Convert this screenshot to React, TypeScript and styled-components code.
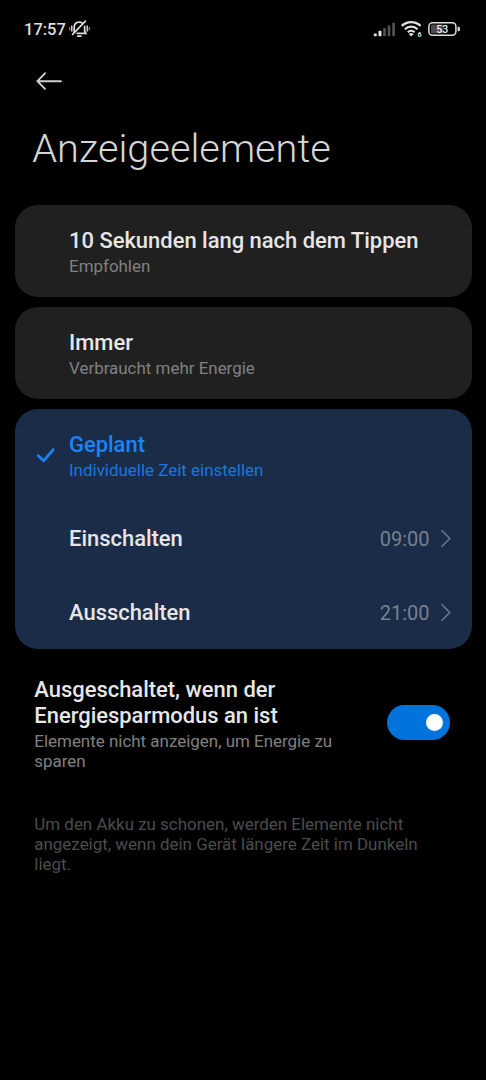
import React from 'react';
import styled, { createGlobalStyle } from 'styled-components';

const GlobalStyle = createGlobalStyle`
  * { box-sizing: border-box; }
  body {
    margin: 0;
    background: #000;
    font-family: Roboto, sans-serif;
    -webkit-font-smoothing: antialiased;
  }
`;

const Screen = styled.div`
  width: 486px;
  height: 1080px;
  overflow: hidden;
  background: #000;
  color: #e6e6e6;
`;

const StatusBar = styled.header`
  display: flex;
  justify-content: space-between;
  align-items: center;
  height: 58px;
  padding: 0 26px 0 24px;
`;

const StatusGroup = styled.div`
  display: flex;
  align-items: center;
`;

const Clock = styled.span`
  font-size: 16.5px;
  line-height: 20px;
  padding-top: 1px;
  font-weight: 500;
  color: #dedede;
  margin-right: 3px;
`;

const NavBar = styled.nav`
  height: 46px;
  padding: 14px 0 0 36px;
`;

const BackButton = styled.button`
  display: block;
  padding: 0;
  border: 0;
  background: none;
  line-height: 0;
`;

const PageTitle = styled.h1`
  margin: 22px 0 0 32.3px;
  font-size: 39.7px;
  line-height: 46px;
  font-weight: 300;
  color: #d6d6d6;
`;

const OptionList = styled.div`
  display: flex;
  flex-direction: column;
  gap: 9.5px;
  margin: 33px 14.5px 0;
`;

const Card = styled.section<{ $selected?: boolean }>`
  border-radius: 23px;
  background: ${p => (p.$selected ? '#1a2c48' : '#202020')};
  height: ${p => (p.$selected ? '240px' : '92.3px')};
`;

const Option = styled.div`
  display: flex;
  padding: 23.3px 20px 0 0;
  height: 94px;
`;

const CheckSlot = styled.div`
  width: 54.5px;
  padding: 15px 0 0 21.5px;
`;

const Label = styled.div<{ $active?: boolean }>`
  font-size: 21.95px;
  line-height: 26px;
  font-weight: 500;
  color: ${p => (p.$active ? '#1a84fa' : '#e6e6e6')};
`;

const Hint = styled.div<{ $active?: boolean }>`
  font-size: 16.95px;
  line-height: 19.8px;
  margin-top: 3.2px;
  color: ${p => (p.$active ? '#1977e0' : '#808080')};
`;

const TimeRow = styled.div`
  display: flex;
  align-items: center;
  height: 73.8px;
  padding: 0 19.5px 0 54.5px;
`;

const TimeValue = styled.span`
  margin-left: auto;
  font-size: 20px;
  line-height: 24px;
  color: #76808f;
  margin-right: 10.5px;
`;

const SwitchRow = styled.section`
  display: flex;
  align-items: center;
  justify-content: space-between;
  margin: 28px 36px 0 34.3px;
`;

const SwitchText = styled.div`
  width: 320px;
`;

const Toggle = styled.button`
  display: flex;
  align-items: center;
  justify-content: flex-end;
  width: 63px;
  height: 35px;
  margin-bottom: 3px;
  padding: 0 7px;
  border: 0;
  border-radius: 18px;
  background: #0273dc;
`;

const Knob = styled.span`
  width: 17.5px;
  height: 17.5px;
  border-radius: 50%;
  background: #fff;
`;

const Note = styled.p`
  margin: 43.7px 34.3px 0;
  width: 400px;
  font-size: 16.95px;
  line-height: 19.8px;
  color: #4c4c4c;
`;

const MutedBell = () => (
  <svg width="21" height="18" viewBox="0 0 21 18" fill="none" stroke="#dcdcdc" strokeWidth="1.7" strokeLinecap="round">
    <path d="M5.2 12.2V7.6C5.2 4.4 7.2 2.2 10.3 2.2c1.2 0 2.2.3 3 .9M15.6 6.4v4.4l1.3 2.6H8.2" />
    <path d="M3.6 14.4 16.4 1.2" />
    <path d="M8.9 16.2h3" strokeWidth="1.8" />
    <path d="M2.8 6v5M18.2 6v5" strokeWidth="1.4" />
    <path d="M.8 7.3v2.6M20.2 7.3v2.6" strokeWidth="1.1" stroke="#999" />
  </svg>
);

const Signal = () => (
  <svg width="22" height="15" viewBox="0 0 22 15">
    <rect x=".8" y="11.4" width="3" height="2.8" rx=".6" fill="#e2e2e2" />
    <rect x="5.5" y="8.8" width="3" height="5.4" rx=".6" fill="#e2e2e2" />
    <rect x="10.2" y="6.1" width="2.6" height="8.1" rx=".6" fill="#555" />
    <rect x="14.7" y="3.4" width="2.6" height="10.8" rx=".6" fill="#555" />
    <rect x="19.3" y=".8" width="2.6" height="13.4" rx=".6" fill="#555" />
  </svg>
);

const WifiIcon = styled.svg`
  margin: 0 4px 0 6px;
`;

const Wifi = () => (
  <WifiIcon width="23" height="20" viewBox="0 -1.6 23 20" fill="none" stroke="#e2e2e2" strokeWidth="2.2">
    <path d="M.8 5.3a13.4 13.4 0 0 1 18.8 0" />
    <path d="M3.9 8.6a9 9 0 0 1 12.6 0" />
    <path d="M6.8 11.7a4.9 4.9 0 0 1 6.8 0" />
    <path d="M10.2 16 7.8 13.5a3.4 3.4 0 0 1 4.8 0z" fill="#e2e2e2" stroke="none" />
    <text x="16.6" y="16.6" fontSize="7" fontWeight="700" fill="#e2e2e2" stroke="none">6</text>
  </WifiIcon>
);

const Battery = () => (
  <svg width="32" height="14" viewBox="0 0 32 14">
    <rect x="3" y="2.6" width="12.5" height="8.8" rx="1.5" fill="#4c4c4c" />
    <rect x=".9" y=".8" width="27" height="12.4" rx="3.6" fill="none" stroke="#dcdcdc" strokeWidth="1.5" />
    <path d="M30 5v4a2 2 0 0 0 0-4z" fill="#dcdcdc" stroke="#dcdcdc" strokeWidth=".8" />
    <text x="14.2" y="10.8" textAnchor="middle" fontSize="10.5" fontWeight="500" fill="#eee">53</text>
  </svg>
);

const BackArrow = () => (
  <svg width="27" height="19" viewBox="0 0 27 19" fill="none" stroke="#cfcfcf" strokeWidth="1.9" strokeLinecap="round" strokeLinejoin="round">
    <path d="M25 9.2H1.6M9 1.3 1.4 9.2 9 16.8" />
  </svg>
);

const Check = () => (
  <svg width="20" height="17" viewBox="0 0 20 17" fill="none" stroke="#1a84fa" strokeWidth="2.8" strokeLinecap="round" strokeLinejoin="round">
    <path d="M2.2 8.8 7.6 13.8 17.2 2.6" />
  </svg>
);

const Chevron = () => (
  <svg width="12" height="20" viewBox="0 0 12 20" fill="none" stroke="#6b7688" strokeWidth="1.6">
    <path d="M1.5 1.3 9.8 9.5 1.5 17.7" />
  </svg>
);

interface ChoiceProps {
  label: string;
  hint: string;
  active?: boolean;
}

const Choice = ({ label, hint, active }: ChoiceProps) => (
  <Option>
    <CheckSlot>{active && <Check />}</CheckSlot>
    <div>
      <Label $active={active}>{label}</Label>
      <Hint $active={active}>{hint}</Hint>
    </div>
  </Option>
);

const TimeSetting = ({ label, value }: { label: string; value: string }) => (
  <TimeRow>
    <Label>{label}</Label>
    <TimeValue>{value}</TimeValue>
    <Chevron />
  </TimeRow>
);

export default function App() {
  return (
    <>
      <GlobalStyle />
      <Screen>
        <StatusBar>
          <StatusGroup>
            <Clock>17:57</Clock>
            <MutedBell />
          </StatusGroup>
          <StatusGroup>
            <Signal />
            <Wifi />
            <Battery />
          </StatusGroup>
        </StatusBar>
        <NavBar>
          <BackButton aria-label="Zurück">
            <BackArrow />
          </BackButton>
        </NavBar>
        <PageTitle>Anzeigeelemente</PageTitle>
        <OptionList>
          <Card>
            <Choice label="10 Sekunden lang nach dem Tippen" hint="Empfohlen" />
          </Card>
          <Card>
            <Choice label="Immer" hint="Verbraucht mehr Energie" />
          </Card>
          <Card $selected>
            <Choice label="Geplant" hint="Individuelle Zeit einstellen" active />
            <TimeSetting label="Einschalten" value="09:00" />
            <TimeSetting label="Ausschalten" value="21:00" />
          </Card>
        </OptionList>
        <SwitchRow>
          <SwitchText>
            <Label>Ausgeschaltet, wenn der Energiesparmodus an ist</Label>
            <Hint>Elemente nicht anzeigen, um Energie zu sparen</Hint>
          </SwitchText>
          <Toggle role="switch" aria-checked="true" aria-label="Energiesparmodus">
            <Knob />
          </Toggle>
        </SwitchRow>
        <Note>
          Um den Akku zu schonen, werden Elemente nicht angezeigt, wenn dein Gerät längere Zeit im Dunkeln liegt.
        </Note>
      </Screen>
    </>
  );
}
